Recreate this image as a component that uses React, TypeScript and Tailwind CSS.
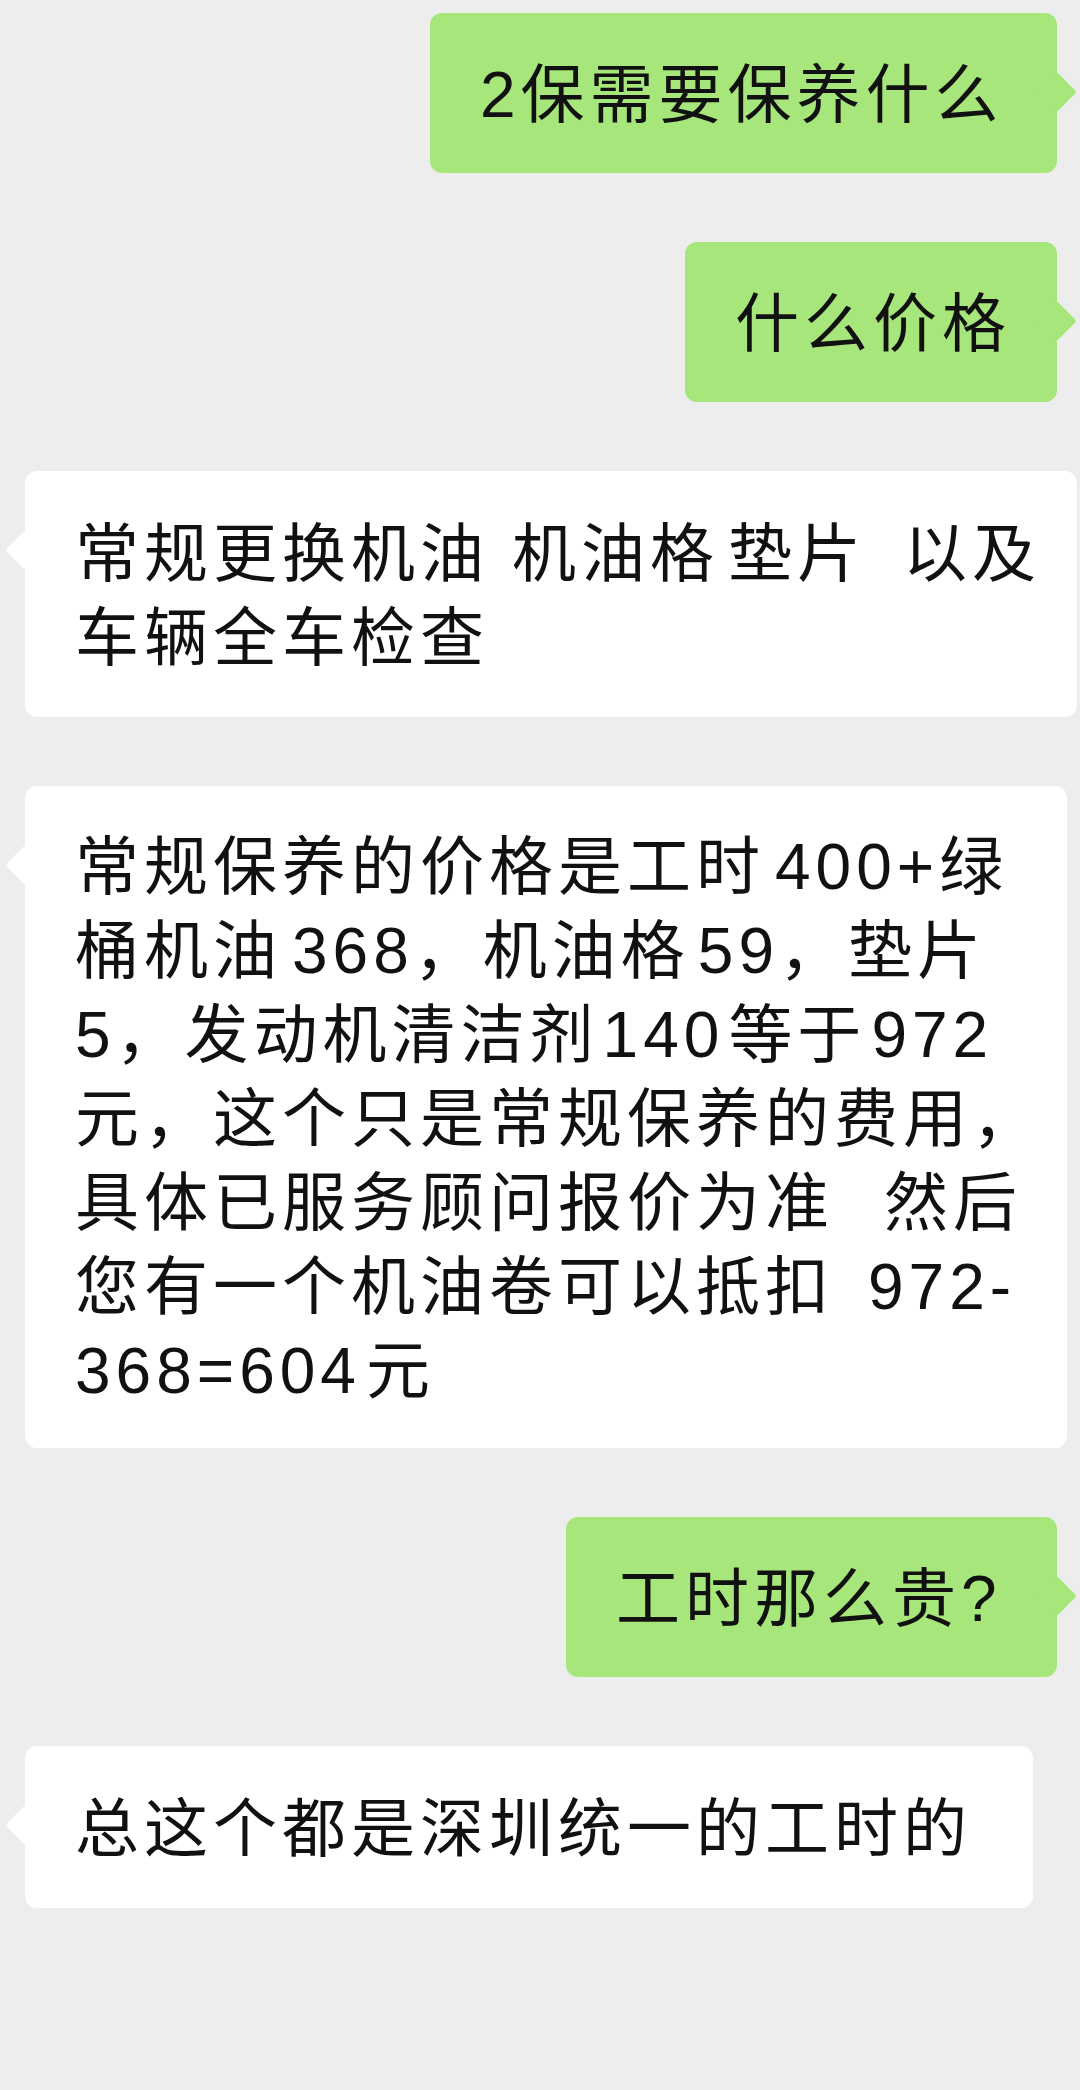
import React from "react";

const TEXT =
  "relative whitespace-nowrap [font-family:'Liberation_Sans','Noto_Sans_CJK_SC',sans-serif] text-[64px] leading-[84px] tracking-[5px] text-[#111111]";

function G({ c }: { c: string }) {
  return <span className={`inline-block ${c}`} />;
}

function Right({ w, children }: { w: string; children: React.ReactNode }) {
  return (
    <div className="flex justify-end pr-[23px]">
      <div className={`relative rounded-[12px] bg-[#a6e67a] pt-[40px] pb-[36px] pl-[50px] ${w}`}>
        <div className="absolute top-[65px] -right-[14px] h-[28px] w-[28px] rotate-45 rounded-[3px] bg-[#a6e67a]" />
        <div className={TEXT}>{children}</div>
      </div>
    </div>
  );
}

function Left({ w, py, children }: { w: string; py: string; children: React.ReactNode }) {
  return (
    <div className="flex justify-start pl-[25px]">
      <div className={`relative rounded-[12px] bg-white pl-[50px] ${py} ${w}`}>
        <div className="absolute top-[65px] -left-[14px] h-[28px] w-[28px] rotate-45 rounded-[3px] bg-white" />
        <div className={TEXT}>{children}</div>
      </div>
    </div>
  );
}

export default function App() {
  return (
    <div className="min-h-[2090px] w-full bg-[#ededed] pt-[13px] flex flex-col gap-[69px]">
      <Right w="w-[627px]">
        <div>2保需要保养什么</div>
      </Right>
      <Right w="w-[372px]">
        <div>什么价格</div>
      </Right>
      <Left w="w-[1052px]" py="pt-[41px] pb-[37px]">
        <div>
          常规更换机油<G c="w-[23px]" />机油格<G c="w-[9px]" />垫片<G c="w-[37px]" />以及
        </div>
        <div>车辆全车检查</div>
      </Left>
      <Left w="w-[1042px]" py="pt-[39px] pb-[35px]">
        <div>
          常规保养的价格是工时<G c="w-[10px]" />400+绿
        </div>
        <div>
          桶机油<G c="w-[10px]" />368，机油格<G c="w-[8px]" />59，垫片
        </div>
        <div>
          5，发动机清洁剂<G c="w-[4px]" />140<G c="w-[4px]" />等于<G c="w-[5px]" />972
        </div>
        <div>元，这个只是常规保养的费用，</div>
        <div>
          具体已服务顾问报价为准<G c="w-[50px]" />然后
        </div>
        <div>
          您有一个机油卷可以抵扣<G c="w-[34px]" />972-
        </div>
        <div>
          368=604<G c="w-[5px]" />元
        </div>
      </Left>
      <Right w="w-[491px]">
        <div>工时那么贵?</div>
      </Right>
      <Left w="w-[1008px]" py="pt-[41px] pb-[37px]">
        <div>总这个都是深圳统一的工时的</div>
      </Left>
    </div>
  );
}
